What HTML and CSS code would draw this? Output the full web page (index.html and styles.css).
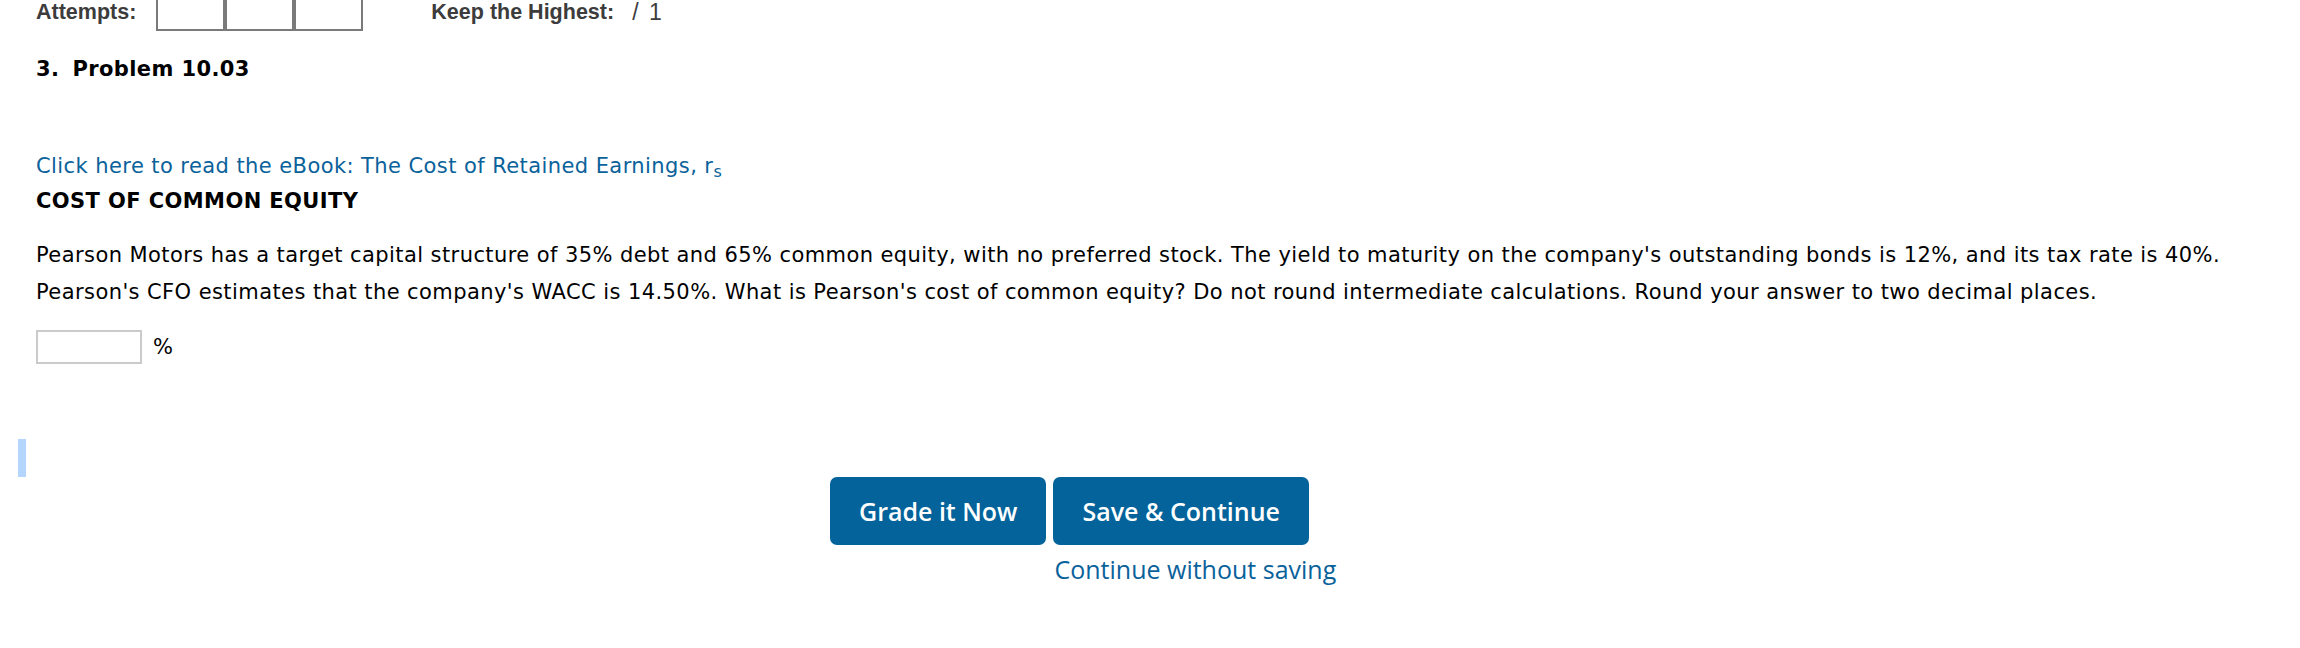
FILE: index.html
```html
<!DOCTYPE html>
<html>
<head>
<meta charset="utf-8">
<link rel="stylesheet" href="styles.css">
</head>
<body>
<div class="page">
  <div class="attempts-row">
    <span class="label">Attempts:</span>
    <div class="boxes">
      <div class="box"></div>
      <div class="box"></div>
      <div class="box"></div>
    </div>
    <span class="label keep">Keep the Highest:</span>
    <span class="score">/ 1</span>
  </div>

  <h2 class="problem-title"><span class="num">3.</span>Problem 10.03</h2>

  <a class="ebook" href="#">Click here to read the eBook: The Cost of Retained Earnings, r<sub>s</sub></a>
  <h3 class="section">COST OF COMMON EQUITY</h3>

  <p class="question">Pearson Motors has a target capital structure of 35% debt and 65% common equity, with no preferred stock. The yield to maturity on the company's outstanding bonds is 12%, and its tax rate is 40%. Pearson's CFO estimates that the company's WACC is 14.50%. What is Pearson's cost of common equity? Do not round intermediate calculations. Round your answer to two decimal places.</p>

  <div class="answer">
    <input class="answer-input" type="text">
    <span class="unit">%</span>
  </div>

  <div class="caret"></div>

  <div class="actions">
    <button class="btn">Grade it Now</button>
    <div class="save-col">
      <button class="btn">Save &amp; Continue</button>
      <a class="continue" href="#">Continue without saving</a>
    </div>
  </div>
</div>
</body>
</html>
```

FILE: styles.css
```css
html, body {
  margin: 0;
  padding: 0;
  background: #ffffff;
}

.page {
  padding: 0 10px 0 36px;
  font-family: "DejaVu Sans", Verdana, sans-serif;
  font-size: 21px;
  letter-spacing: 0.42px;
  color: #000;
}

.attempts-row {
  display: flex;
  align-items: flex-start;
  height: 31px;
  letter-spacing: 0;
}

.label {
  font-family: "Liberation Sans", Arial, sans-serif;
  font-weight: bold;
  font-size: 21.5px;
  line-height: 24px;
  color: #3c3c3c;
}

.boxes {
  display: flex;
  margin: -14px 0 0 20px;
}

.box {
  width: 69px;
  height: 45px;
  box-sizing: border-box;
  border: 2px solid #7a7a7a;
}

.keep {
  margin-left: 68px;
}

.score {
  font-family: "Liberation Sans", Arial, sans-serif;
  font-size: 23px;
  line-height: 24px;
  word-spacing: 4px;
  color: #3c3c3c;
  margin-left: 18px;
}

.problem-title {
  margin: 21px 0 0 0;
  font-size: 21px;
  font-weight: bold;
  letter-spacing: 0.4px;
  line-height: 34px;
}

.problem-title .num {
  margin-right: 13px;
}

.ebook {
  display: block;
  margin-top: 63px;
  line-height: 34px;
  color: #0a629b;
  text-decoration: none;
}

.ebook sub {
  font-size: 16px;
  vertical-align: -4px;
  line-height: 0;
}

.section {
  margin: 1px 0 0 0;
  font-size: 21px;
  font-weight: bold;
  letter-spacing: 0.4px;
  line-height: 34px;
}

.question {
  margin: 19px 0 0 0;
  line-height: 37px;
}

.answer {
  display: flex;
  align-items: center;
  margin-top: 19px;
  height: 34px;
}

.answer-input {
  width: 106px;
  height: 34px;
  box-sizing: border-box;
  border: 2px solid #cbcbcb;
  margin: 0;
  padding: 0;
  background: #fff;
}

.unit {
  margin-left: 11px;
  line-height: 34px;
  letter-spacing: 0;
}

.caret {
  width: 8px;
  height: 38px;
  margin: 75px 0 0 -18px;
  background: #b4d5fe;
}

.actions {
  display: flex;
  align-items: flex-start;
  gap: 7px;
  padding-left: 794px;
  letter-spacing: 0;
}

.save-col {
  display: flex;
  flex-direction: column;
  align-items: flex-start;
}

.btn {
  height: 68px;
  padding: 0 29px;
  border: none;
  border-radius: 7px;
  background: #03639a;
  color: #fff;
  font-family: "Open Sans", sans-serif;
  font-weight: 600;
  font-size: 25px;
  cursor: pointer;
}

.continue {
  margin: 7px 0 0 1px;
  font-family: "Open Sans", sans-serif;
  font-size: 25px;
  color: #0a629b;
  text-decoration: none;
}
```
